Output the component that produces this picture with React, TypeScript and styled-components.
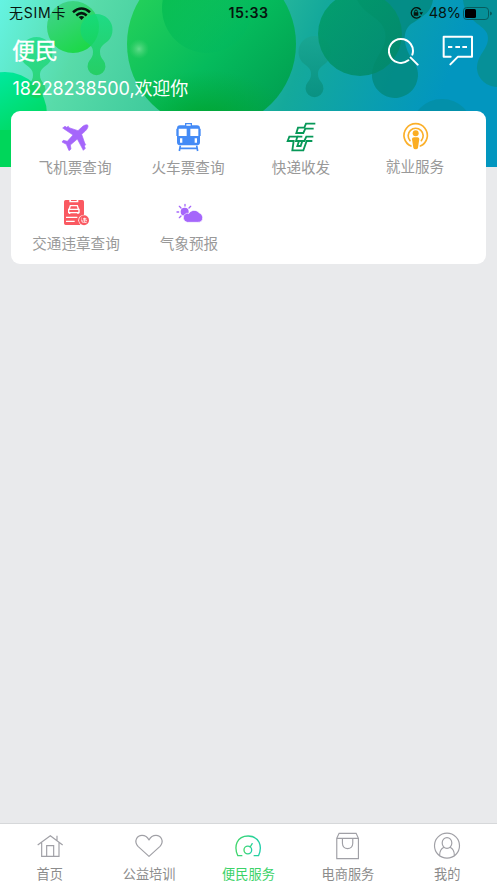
import React from 'react';
import styled, { createGlobalStyle } from 'styled-components';

const GlobalStyle = createGlobalStyle`
  * { box-sizing: border-box; }
  body {
    margin: 0;
    background: #e9eaec;
    font-family: Inter, "Noto Sans CJK SC", sans-serif;
  }
  svg { display: block; flex: none; }
`;

const Page = styled.div`
  height: 883px;
  display: flex;
  flex-direction: column;
  position: relative;
  overflow: hidden;
`;

const Backdrop = styled.svg`
  position: absolute;
  left: 0;
  top: 0;
  z-index: -1;
`;

const StatusBar = styled.div`
  height: 26px;
  display: grid;
  grid-template-columns: 1fr auto 1fr;
  align-items: center;
  padding: 0 5px 0 9px;
  color: #06150f;
  font-size: 14px;
  line-height: 26px;
`;

const StatusGroup = styled.div<{ $end?: boolean }>`
  display: flex;
  align-items: center;
  justify-content: ${p => (p.$end ? 'flex-end' : 'flex-start')};
  white-space: nowrap;
`;

const Carrier = styled.span`
  letter-spacing: 0.75px;
  margin-right: 6px;
`;

const Clock = styled.span`
  margin-right: 4px;
  font-weight: 600;
  font-size: 14.2px;
  letter-spacing: 0.5px;
`;

const Percent = styled.span`
  margin: 0 2px 0 6px;
  font-size: 14.5px;
  letter-spacing: -0.1px;
`;

const TitleRow = styled.div`
  height: 50px;
  display: flex;
  align-items: center;
  justify-content: space-between;
  padding: 0 23px 0 12px;
`;

const Title = styled.h1`
  margin: 0;
  color: #fff;
  font-size: 23px;
  line-height: 50px;
  font-weight: 400;
  -webkit-text-stroke: 0.3px #fff;
`;

const Actions = styled.div`
  display: flex;
  align-items: center;
  gap: 22px;
`;

const Greeting = styled.div`
  height: 35px;
  padding: 1px 12.5px 0;
  color: #fff;
  font-size: 18px;
  line-height: 24px;
  letter-spacing: -0.1px;
  white-space: nowrap;
`;

const Card = styled.main`
  margin: 0 11px;
  height: 153px;
  padding: 10px 0 0 7px;
  background: #fff;
  border-radius: 9px;
  display: grid;
  grid-template-columns: 114px 112px 114px 114px;
  grid-auto-rows: 76px;
`;

const Service = styled.div`
  display: flex;
  flex-direction: column;
  align-items: center;
`;

const ServiceLabel = styled.span<{ $shift?: number; $raised?: boolean }>`
  margin-top: ${p => (p.$raised ? 4 : 5)}px;
  padding-left: ${p => p.$shift ?? 0}px;
  color: #999;
  font-size: 14.6px;
  line-height: 20px;
  white-space: nowrap;
`;

const Tabs = styled.nav`
  margin-top: auto;
  height: 60px;
  background: #fff;
  border-top: 1px solid #d6d8da;
  display: grid;
  grid-template-columns: repeat(5, 1fr);
`;

const Tab = styled.div<{ $active?: boolean }>`
  padding-top: 7px;
  display: flex;
  flex-direction: column;
  align-items: center;
  color: ${p => (p.$active ? '#3bd268' : '#8c8c8c')};
`;

const TabLabel = styled.span`
  margin-top: 1px;
  font-size: 13.2px;
  line-height: 20px;
`;

const Icon = ({ box, children }: { box: string; children: React.ReactNode }) => (
  <svg width="32" height="32" viewBox={box}>{children}</svg>
);

// A round head, a narrow neck and a smaller ball below it; (x, y) is the centre of the head.
const Drop = ({ x, y, fill, opacity }: { x: number; y: number; fill: string; opacity: number }) => (
  <path
    transform={`translate(${x} ${y})`}
    fill={fill}
    opacity={opacity}
    d="M-11.500 11A16 16 0 1 1 11.500 11C6 15 3.500 17 3.500 22C3.500 26 5 28 7 30.500A9 9 0 1 1 -7 30.500C-5 28 -3.500 26 -3.500 22C-3.500 17 -6 15 -11.500 11Z"
  />
);

const HeaderArt = () => (
  <Backdrop width="497" height="167" viewBox="0 0 497 167">
    <defs>
      <linearGradient id="sky" gradientUnits="userSpaceOnUse" x1="0" y1="0" x2="410" y2="170">
        <stop offset="0" stopColor="#65f3e2" />
        <stop offset=".2" stopColor="#58dba9" />
        <stop offset=".42" stopColor="#3fca9c" />
        <stop offset=".68" stopColor="#14a99b" />
        <stop offset="1" stopColor="#0296bf" />
      </linearGradient>
      <linearGradient id="big" gradientUnits="userSpaceOnUse" x1="135" y1="0" x2="275" y2="130">
        <stop offset="0" stopColor="#23d05a" />
        <stop offset=".5" stopColor="#05bb5c" />
        <stop offset="1" stopColor="#009c50" />
      </linearGradient>
      <linearGradient id="inner" gradientUnits="userSpaceOnUse" x1="165" y1="0" x2="250" y2="60">
        <stop offset="0" stopColor="#00ba50" />
        <stop offset="1" stopColor="#00b566" stopOpacity=".1" />
      </linearGradient>
      <linearGradient id="lime" x1="0" y1="0" x2=".6" y2="1">
        <stop offset="0" stopColor="#45d394" />
        <stop offset="1" stopColor="#1cd848" />
      </linearGradient>
      <linearGradient id="drop" x1="0" y1="0" x2="0" y2="1">
        <stop offset="0" stopColor="#12db7d" />
        <stop offset="1" stopColor="#1bcc55" />
      </linearGradient>
      <linearGradient id="corner" x1="0" y1="0" x2=".6" y2="1">
        <stop offset="0" stopColor="#00edb0" />
        <stop offset="1" stopColor="#00d553" />
      </linearGradient>
      <linearGradient id="pine" x1="0" y1="0" x2="1" y2="1">
        <stop offset="0" stopColor="#009e65" />
        <stop offset="1" stopColor="#03866a" />
      </linearGradient>
      <linearGradient id="teal" x1="0" y1="0" x2="0" y2="1">
        <stop offset="0" stopColor="#1aa590" />
        <stop offset="1" stopColor="#078b78" />
      </linearGradient>
      <radialGradient id="glow">
        <stop offset="0" stopColor="#69df91" stopOpacity=".9" />
        <stop offset="1" stopColor="#4bd373" stopOpacity="0" />
      </radialGradient>
      <radialGradient id="shade">
        <stop offset="0" stopColor="#00a020" stopOpacity=".8" />
        <stop offset="1" stopColor="#00a832" stopOpacity="0" />
      </radialGradient>
      <clipPath id="orb"><circle cx="211.500" cy="44" r="84.500" /></clipPath>
    </defs>
    <rect width="497" height="167" fill="url(#sky)" />
    <circle cx="73" cy="27" r="26" fill="url(#lime)" />
    <Drop x={96.5} y={30} fill="url(#drop)" opacity={0.8} />
    <circle cx="5" cy="114" r="42" fill="url(#corner)" />
    <Drop x={36.5} y={53} fill="url(#drop)" opacity={0.7} />
    <path d="M0 130H30V167H0Z" fill="#00d65a" />
    <circle cx="211.500" cy="44" r="84.500" fill="url(#big)" />
    <g clipPath="url(#orb)">
      <circle cx="207" cy="8" r="45" fill="url(#inner)" opacity=".7" />
      <ellipse cx="205" cy="125" rx="90" ry="55" fill="url(#shade)" />
      <circle cx="139" cy="49" r="10" fill="url(#glow)" />
    </g>
    <Drop x={314.5} y={52} fill="url(#teal)" opacity={0.75} />
    <path d="M357 0H433C431 12 425 15 411 24C400 33 405 50 414 62A23 23 0 1 1 373 68C377 54 388 46 385 32C382 17 365 16 357 0Z" fill="#03887d" opacity=".8" />
    <circle cx="360" cy="34" r="42" fill="url(#pine)" opacity=".85" />
    <path d="M463 0H497V87A20 20 0 0 1 477 69C477 54 488 50 488 38C488 24 466 25 463 0Z" fill="#078f91" opacity=".85" />
    <circle cx="442" cy="130" r="31" fill="#048fa5" opacity=".8" />
  </Backdrop>
);

const services = [
  {
    label: '飞机票查询',
    icon: (
      <Icon box="177 63 96 96">
        <path fill="#a566fb" stroke="#a566fb" strokeWidth="2" strokeLinejoin="round" d="M263 75C257 73 250 77 245 82L234 92L207 83L205 79L200 82L195 79L188 84L219 105L202 124L190 121L186 126L199 133L207 152L213 147L211 135L232 117L250 151L256 145L253 138L257 134L254 129L245 103L256 93C262 87 266 80 263 75Z" />
      </Icon>
    ),
  },
  {
    label: '火车票查询',
    icon: (
      <Icon box="516 63 96 96">
        <path fill="#448bf6" fillRule="evenodd" d="M555 69H576V76H591Q600 76 600 86H602V108H600V127Q600 136 591 136H540Q531 136 531 127V108H529V86H531Q531 76 540 76H555ZM559 73V77H572V73ZM536 86V108H560V86ZM571 86V108H595V86ZM540 115V128H547V115ZM584 115V128H591V115Z" />
        <path fill="none" stroke="#448bf6" strokeWidth="5" d="M541 137L538 153M590 137L593 153M540 145H591" />
      </Icon>
    ),
  },
  {
    label: '快递收发',
    icon: (
      <Icon box="114 63 96 96">
        <g fill="none" stroke="#079858" strokeWidth="5.500">
          <path d="M205 71H177L172 83H153L148 99H169L175 86H200" />
          <path d="M199 110H178L172 123H147L151 110H127L122 123H140L136 151H169L179 123H196" />
          <path d="M151 110H166M156 123L151 138H161L166 123" />
        </g>
      </Icon>
    ),
  },
  {
    label: '就业服务',
    raised: true,
    icon: (
      <Icon box="456 63 96 96">
        <g fill="none" stroke="#fbb02b" strokeWidth="5" strokeLinecap="round">
          <path d="M492 138A35 35 0 1 1 520 138" />
          <path d="M489 122A22.500 22.500 0 1 1 523 122" />
        </g>
        <circle cx="506" cy="100" r="9" fill="#fbad22" />
        <path fill="#fbad22" d="M495 117Q495 112 501 112H511Q517 112 517 117L513 143Q512 148 506 148Q500 148 499 143Z" />
      </Icon>
    ),
  },
  {
    label: '交通违章查询',
    shift: 2,
    icon: (
      <Icon box="177 36 96 96">
        <path fill="#fa5961" d="M197 45H208V52H235V45H247Q252 45 252 50V120H197Q192 120 192 115V50Q192 45 197 45ZM213 45H230V48H213Z" />
        <path fill="none" stroke="#fff" strokeWidth="4" d="M207 74L211 62H232L236 74M206 73H237V83H206ZM209 83V87M234 83V87M198 97H232M198 109H224" />
        <circle cx="252" cy="106" r="17" fill="#fff" />
        <circle cx="252" cy="106" r="15" fill="#fa5961" />
        <path fill="none" stroke="#fff" strokeWidth="2.300" d="M244 99L246 101M243 105H246V111L260 113M249 101H259M249 105H259V109M254 98V111" />
      </Icon>
    ),
  },
  {
    label: '气象预报',
    shift: 2,
    icon: (
      <Icon box="516 36 96 96">
        <circle cx="554" cy="80" r="12" fill="#a566fb" />
        <path stroke="#a566fb" strokeWidth="4" strokeLinecap="round" d="M555 58V63M538 64L543 69M572 64L567 69M531 81H536M538 98L543 93" />
        <path fill="#a566fb" stroke="#fff" strokeWidth="2" d="M562 112A14 14 0 0 1 557 86C561 84 564 85 566 86A19 19 0 0 1 598 84C604 86 608 92 608 98Q608 112 593 112Z" />
      </Icon>
    ),
  },
];

const tabs = [
  {
    label: '首页',
    icon: (
      <Icon box="101 48 96 96">
        <g fill="none" stroke="#a0a0a6" strokeWidth="3.500">
          <path d="M112 90L150 62L187 90M170 76V62M124 83V124H176V83M139 124V92H160V124" />
        </g>
      </Icon>
    ),
  },
  {
    label: '公益培训',
    icon: (
      <Icon box="399 48 96 96">
        <path fill="none" stroke="#a0a0a6" strokeWidth="3.500" strokeLinejoin="round" d="M447 124L414 94C400 77 412 61 426 61C437 61 443 67 447 75C451 67 457 61 468 61C482 61 494 77 480 94Z" />
      </Icon>
    ),
  },
  {
    label: '便民服务',
    active: true,
    icon: (
      <Icon box="697.5 48 96 96">
        <defs>
          <linearGradient id="dial" x1="0" x2="1">
            <stop offset="0" stopColor="#40d66b" />
            <stop offset="1" stopColor="#20cfa9" />
          </linearGradient>
        </defs>
        <g fill="none" stroke="url(#dial)" strokeWidth="4" strokeLinecap="round">
          <path d="M727 122H715C702 94 712 63 746 63C779 63 790 94 777 122H764" />
          <circle cx="745" cy="105" r="11.500" />
          <path d="M752 96L758 86" />
        </g>
      </Icon>
    ),
  },
  {
    label: '电商服务',
    icon: (
      <Icon box="254.7 48 96 96">
        <path fill="none" stroke="#a0a0a6" strokeWidth="3.500" d="M269 70L276 55H327L334 70V131H269ZM269 70H334M286 70V85C286 106 317 106 317 85V70" />
      </Icon>
    ),
  },
  {
    label: '我的',
    icon: (
      <Icon box="552 48 96 96">
        <g fill="none" stroke="#a0a0a6" strokeWidth="3.500">
          <circle cx="600" cy="92" r="37.500" />
          <ellipse cx="600" cy="84" rx="14.500" ry="16" />
          <path d="M591 97C582 101 578 108 578 121M609 97C618 101 622 108 622 121" />
        </g>
      </Icon>
    ),
  },
];

export default function App() {
  return (
    <Page>
      <GlobalStyle />
      <HeaderArt />
      <StatusBar>
        <StatusGroup>
          <Carrier>无SIM卡</Carrier>
          <svg width="19" height="13" viewBox="0 0 19 13">
            <g fill="none" stroke="#06150f" strokeWidth="2.600">
              <path d="M1 5.200Q9.500-2.200 18 5.200M4.300 8.400Q9.500 4 14.700 8.400" />
            </g>
            <path fill="#06150f" d="M6.700 10Q9.500 7.900 12.300 10L9.500 12.900Z" />
          </svg>
        </StatusGroup>
        <Clock>15:33</Clock>
        <StatusGroup $end>
          <svg width="13" height="12" viewBox="0 0 13 12">
            <path fill="none" stroke="#06150f" strokeWidth="1.300" d="M10.800 3A5.200 5.200 0 1 0 10.500 9.200" />
            <path fill="#06150f" d="M9.400 5.200H13L11.200 8ZM3.700 5.300H8.300V8.800H3.700Z" />
            <path fill="none" stroke="#06150f" d="M4.700 5.500V4.300Q4.700 3 6 3T7.300 4.300V5.500" />
          </svg>
          <Percent>48%</Percent>
          <svg width="29" height="13" viewBox="0 0 29 13">
            <rect x=".5" y=".5" width="25" height="12" rx="3.300" fill="none" stroke="#075c5d" />
            <rect x="2" y="2" width="11" height="9" rx="1.500" fill="#000" />
            <path fill="#075c5d" d="M27 4.500Q29 5 29 6.500T27 8.500Z" />
          </svg>
        </StatusGroup>
      </StatusBar>
      <TitleRow>
        <Title>便民</Title>
        <Actions>
          <svg width="32" height="32" viewBox="421 105 96 96">
            <path fill="none" stroke="#fff" strokeWidth="6" strokeLinecap="round" d="M482 181A36 36 0 1 1 494 164M489 173L510 194" />
          </svg>
          <svg width="32" height="32" viewBox="585 106 96 96">
            <path fill="none" stroke="#fff" strokeWidth="6" strokeLinecap="round" strokeLinejoin="round" d="M611 171H590V111H675V171H633L610 194" />
            <path stroke="#fff" strokeWidth="6" d="M603 142H616M625 142H639M646 142H660" />
          </svg>
        </Actions>
      </TitleRow>
      <Greeting>18228238500,欢迎你</Greeting>
      <Card>
        {services.map(s => (
          <Service key={s.label}>
            {s.icon}
            <ServiceLabel $shift={s.shift} $raised={s.raised}>{s.label}</ServiceLabel>
          </Service>
        ))}
      </Card>
      <Tabs>
        {tabs.map(t => (
          <Tab key={t.label} $active={t.active}>
            {t.icon}
            <TabLabel>{t.label}</TabLabel>
          </Tab>
        ))}
      </Tabs>
    </Page>
  );
}
